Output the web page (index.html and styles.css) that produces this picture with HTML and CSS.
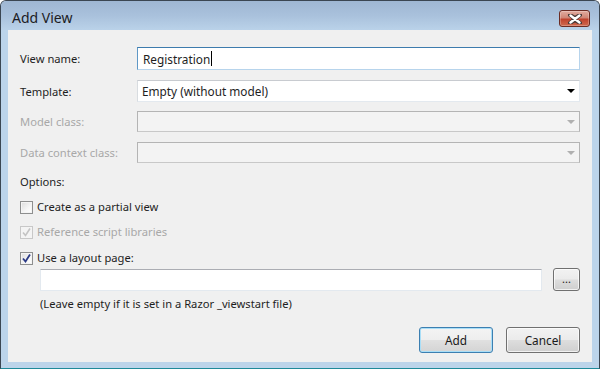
FILE: index.html
```html
<!DOCTYPE html>
<html>
<head>
<meta charset="utf-8">
<link rel="stylesheet" href="styles.css">
</head>
<body>
<div class="window">
  <div class="titlebar">
    <span class="title">Add View</span>
    <div class="close">
      <svg width="16" height="10" viewBox="0 0 16 10">
        <path d="M3 1 L8 4 L13 1 M3 9 L8 6 L13 9 M3 1 L13 9 M13 1 L3 9" fill="none" stroke="#4a3a38" stroke-width="4" stroke-linecap="round"/>
        <path d="M3.5 1.5 L12.5 8.5 M12.5 1.5 L3.5 8.5" fill="none" stroke="#ffffff" stroke-width="2.4" stroke-linecap="round"/>
      </svg>
    </div>
  </div>
  <div class="client">
    <div class="row r1">
      <label class="lbl">View name:</label>
      <div class="textbox focus">Registration<span class="caret"></span></div>
    </div>
    <div class="row r2">
      <label class="lbl">Template:</label>
      <div class="combo">Empty (without model)<span class="arrow"></span></div>
    </div>
    <div class="row r3">
      <label class="lbl dis">Model class:</label>
      <div class="combo disabled"><span class="arrow"></span></div>
    </div>
    <div class="row r4">
      <label class="lbl dis">Data context class:</label>
      <div class="combo disabled"><span class="arrow"></span></div>
    </div>
    <div class="options">Options:</div>
    <div class="check c1"><span class="box"></span><span>Create as a partial view</span></div>
    <div class="check c2 dis"><span class="box checked disbox">
      <svg width="9" height="9" viewBox="0 0 9 9"><path d="M1 4.5 L3.5 7.5 L8 0.5" fill="none" stroke="#c4c4c4" stroke-width="1.6"/></svg>
    </span><span>Reference script libraries</span></div>
    <div class="check c3"><span class="box checked">
      <svg width="9" height="9" viewBox="0 0 9 9"><path d="M1 4.5 L3.5 7.5 L8 0.5" fill="none" stroke="#2b3a86" stroke-width="1.8"/></svg>
    </span><span>Use a layout page:</span></div>
    <div class="layout-row">
      <div class="textbox plain"></div>
      <div class="btn small">...</div>
    </div>
    <div class="note">(Leave empty if it is set in a Razor _viewstart file)</div>
    <div class="buttons">
      <div class="btn default">Add</div>
      <div class="btn">Cancel</div>
    </div>
  </div>
</div>
</body>
</html>
```
FILE: styles.css
```css
html, body {
  margin: 0;
  padding: 0;
  background: #ffffff;
}
body {
  font-family: "Noto Sans", "Open Sans", sans-serif;
  font-size: 11.2px;
  color: #1e1e1e;
}
.window {
  width: 600px;
  height: 369px;
  box-sizing: border-box;
  border: 1px solid #3b4652;
  border-bottom-color: #1f8a9a;
  border-radius: 6px 6px 0 0;
  background: #bcd4ea;
  display: flex;
  flex-direction: column;
  overflow: hidden;
}
.titlebar {
  height: 29px;
  flex: none;
  background: linear-gradient(to bottom, #9fb7d3 0%, #a9c1dc 50%, #bad2e9 100%);
  display: flex;
  justify-content: space-between;
  align-items: flex-start;
  padding: 0 9px 0 11px;
}
.title {
  font-size: 14px;
  line-height: 16px;
  margin-top: 9px;
  color: #1c1c24;
}
.close {
  margin-top: 9px;
  width: 29px;
  height: 15px;
  border: 1px solid #6b2c24;
  border-radius: 3px;
  background: linear-gradient(to bottom, #e1aca0 0%, #d08676 45%, #c0432e 55%, #cf6a50 100%);
  display: flex;
  align-items: center;
  justify-content: center;
  box-shadow: inset 0 0 0 1px rgba(255,255,255,0.25);
}
.client {
  flex: 1;
  margin: 0 7px 6px 7px;
  background: #f0f0f0;
  padding: 0 12px 0 12px;
  display: flex;
  flex-direction: column;
  position: relative;
}
.row {
  display: flex;
  align-items: center;
}
.r1 { margin-top: 17px; }
.r2 { margin-top: 10px; }
.r3 { margin-top: 9px; }
.r4 { margin-top: 10px; }
.lbl {
  width: 117px;
  flex: none;
}
.lbl.dis, .dis { color: #a8a8a8; }
.textbox {
  flex: 1;
  height: 23px;
  box-sizing: border-box;
  background: #ffffff;
  border: 1px solid #e3e9ef;
  border-top-color: #abadb3;
  padding-left: 5px;
  display: flex;
  align-items: center;
}
.textbox.focus {
  border-color: #b7d4ec;
  border-top-color: #3d7bad;
  border-left-color: #5f98c6;
  font-size: 11.8px;
}
.caret {
  display: inline-block;
  width: 1px;
  height: 15px;
  background: #000;
  margin-left: 1px;
}
.combo {
  flex: 1;
  height: 22px;
  box-sizing: border-box;
  background: #ffffff;
  border: 1px solid #e3e9ef;
  border-top-color: #c8cbd0;
  border-left-color: #d8dce0;
  padding-left: 4px;
  display: flex;
  align-items: center;
  position: relative;
  font-size: 11.8px;
}
.combo.disabled {
  background: #f3f3f3;
  border: 1px solid #b4b4b4;
  border-bottom-color: #c8c8c8;
  height: 21px;
}
.arrow {
  position: absolute;
  right: 4px;
  top: 50%;
  margin-top: -2px;
  width: 0;
  height: 0;
  border-left: 4px solid transparent;
  border-right: 4px solid transparent;
  border-top: 4px solid #000;
}
.disabled .arrow { border-top-color: #b0b0b0; }
.options {
  margin-top: 11px;
  line-height: 16px;
}
.check {
  display: flex;
  align-items: center;
  gap: 4px;
  line-height: 16px;
}
.c1 { margin-top: 9px; }
.c2 { margin-top: 9px; }
.c3 { margin-top: 10px; }
.box {
  width: 13px;
  height: 13px;
  box-sizing: border-box;
  border: 1px solid #8e8f8f;
  background: linear-gradient(135deg, #dcdcdc 0%, #f6f6f6 60%, #ffffff 100%);
  box-shadow: inset 0 0 0 1px #f4f4f4;
  display: flex;
  align-items: center;
  justify-content: center;
  flex: none;
}
.box.disbox {
  border-color: #c8c8c8;
  background: #f4f4f4;
}
.layout-row {
  display: flex;
  align-items: center;
  margin-top: 2px;
  padding-left: 20px;
  gap: 11px;
}
.layout-row .textbox {
  height: 22px;
}
.note {
  margin-top: 5px;
  padding-left: 20px;
  line-height: 16px;
}
.buttons {
  display: flex;
  justify-content: flex-end;
  gap: 13px;
  margin-top: 15px;
}
.btn {
  width: 74px;
  height: 26px;
  box-sizing: border-box;
  border: 1px solid #707070;
  border-radius: 3px;
  background: linear-gradient(to bottom, #f2f2f2 0%, #ebebeb 48%, #dddddd 52%, #cfcfcf 100%);
  box-shadow: inset 0 0 0 1px rgba(255,255,255,0.7);
  display: flex;
  align-items: center;
  justify-content: center;
  font-size: 11.8px;
  color: #1a1a1a;
}
.btn.default {
  border-color: #3c7fb1;
  box-shadow: inset 0 0 0 1px #a9def7;
  background: linear-gradient(to bottom, #f4f4f4 0%, #eeeeee 48%, #e0e0e0 52%, #d4d4d4 100%);
}
.btn.small {
  width: 27px;
  height: 23px;
  font-size: 11px;
  line-height: 10px;
  padding-bottom: 2px;
  flex: none;
}
```
